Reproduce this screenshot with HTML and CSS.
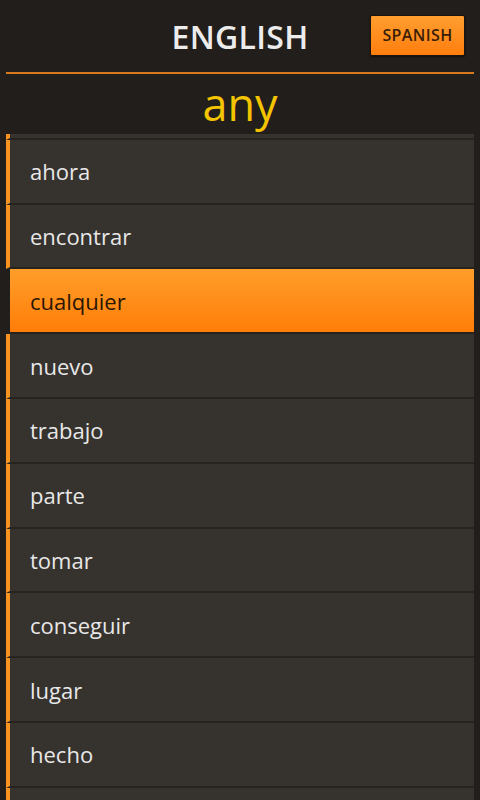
FILE: index.html
```html
<!DOCTYPE html>
<html lang="es">
<head>
  <meta charset="UTF-8">
  <meta name="viewport" content="width=device-width, initial-scale=1.0" />
  <title>English - Spanish</title>
  <link rel="stylesheet" href="styles.css">
</head>
<body>
  <div class="app">
    <div class="header">
      <span></span>
      <h1 class="title">ENGLISH</h1>
      <button class="lang-btn">SPANISH</button>
    </div>
    <div class="divider"></div>
    <div class="word">any</div>
    <div class="word-list">
      <ul>
        <li class="row"></li>
        <li class="row">ahora</li>
        <li class="row">encontrar</li>
        <li class="row selected">cualquier</li>
        <li class="row">nuevo</li>
        <li class="row">trabajo</li>
        <li class="row">parte</li>
        <li class="row">tomar</li>
        <li class="row">conseguir</li>
        <li class="row">lugar</li>
        <li class="row">hecho</li>
        <li class="row"></li>
      </ul>
    </div>
  </div>
</body>
</html>
```

FILE: styles.css
```css
body {
  margin: 0;
  background: #221e1b;
  font-family: 'Open Sans', 'Noto Sans', sans-serif;
}

.app {
  height: 800px;
  display: flex;
  flex-direction: column;
  overflow: hidden;
}

.header {
  height: 72px;
  display: grid;
  grid-template-columns: 1fr auto 1fr;
  align-items: center;
}

.title {
  margin: 0;
  font-size: 32px;
  font-weight: 600;
  color: #ececec;
  letter-spacing: 0.3px;
  line-height: 1;
  padding-top: 2px;
}

.lang-btn {
  justify-self: end;
  margin: 0 15px 2px 0;
  width: 95px;
  height: 41px;
  padding: 0;
  border: 1px solid #1a1410;
  border-radius: 2px;
  background: linear-gradient(#ff9e30, #ff7e0e);
  color: #3a1d06;
  font-family: inherit;
  font-size: 16px;
  font-weight: 600;
  letter-spacing: 0.4px;
  box-shadow: 0 1px 2px rgba(0, 0, 0, 0.5);
}

.divider {
  height: 2px;
  margin: 0 6px;
  background: #d8781c;
}

.word {
  height: 60px;
  text-align: center;
  font-size: 45px;
  line-height: 60px;
  color: #f4c400;
}

.word-list {
  flex: 1;
  margin: 0 6px;
  overflow: hidden;
}

.word-list ul {
  list-style: none;
  margin: -59px 0 0 0;
  padding: 0;
}

.row {
  box-sizing: border-box;
  height: 64.8px;
  padding-left: 20px;
  display: flex;
  align-items: center;
  background: #36322e;
  border-left: 4px solid #f7931e;
  border-bottom: 2px solid #27231f;
  font-size: 22px;
  color: #e8e8e8;
}

.row.selected {
  border-left-color: #221e1b;
  background: linear-gradient(#ff9d2a, #ff7e08);
  color: #2b1604;
}
```
